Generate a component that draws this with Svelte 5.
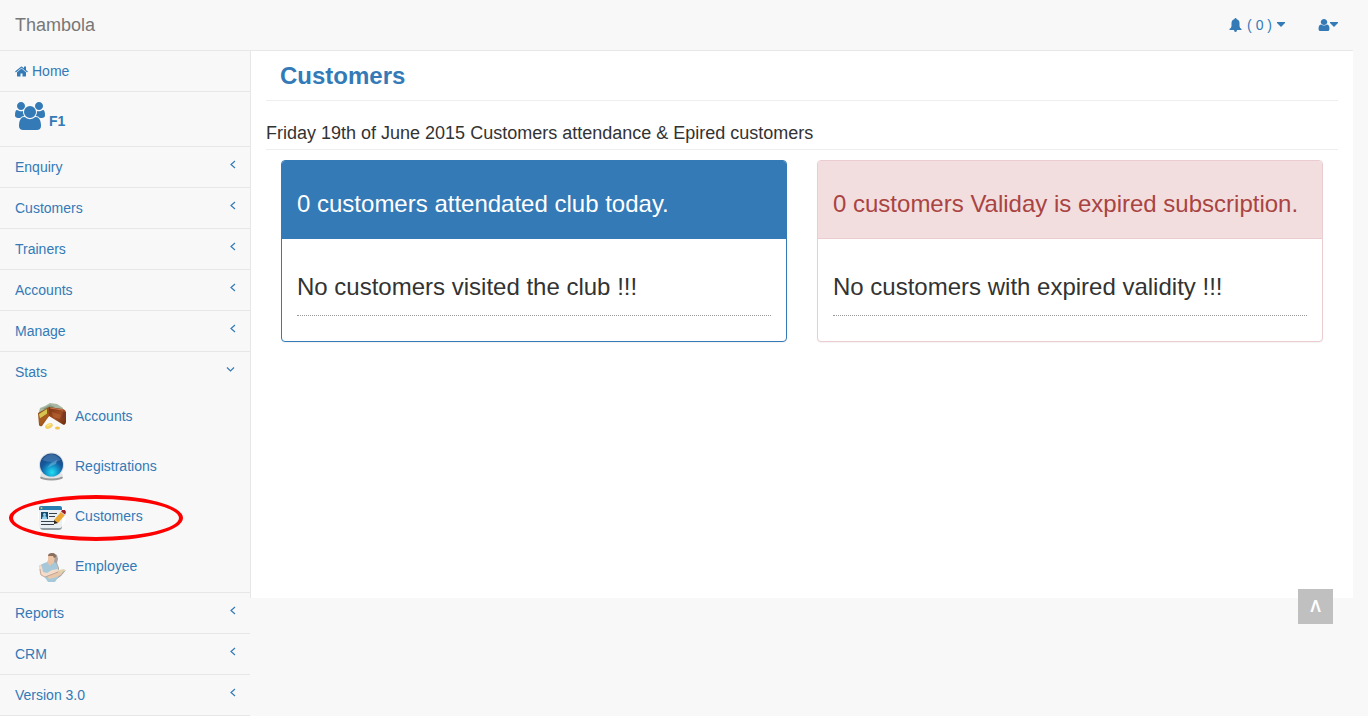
<script>
  const before = ['Enquiry', 'Customers', 'Trainers', 'Accounts', 'Manage'];
  const after = ['Reports', 'CRM', 'Version 3.0'];
  const stats = [
    { label: 'Accounts', icon: 'wallet' },
    { label: 'Registrations', icon: 'globe' },
    { label: 'Customers', icon: 'card', marked: true },
    { label: 'Employee', icon: 'person' }
  ];
  const panels = [
    { kind: 'primary', title: '0 customers attendated club today.', body: 'No customers visited the club !!!' },
    { kind: 'danger', title: '0 customers Validay is expired subscription.', body: 'No customers with expired validity !!!' }
  ];
</script>

{#snippet caret()}
  <svg class="caret" viewBox="0 0 8 5" aria-hidden="true"><path d="M0 0h8v1L4 5 0 1z" /></svg>
{/snippet}

{#snippet section(label)}
  <li>
    <a class="row" href="#top">
      <span>{label}</span>
      <svg class="arrow" viewBox="0 0 10 10" aria-hidden="true"><path d="M7 1 3 4.500 7 8" /></svg>
    </a>
  </li>
{/snippet}

{#snippet picture(name)}
  <svg class="picture" viewBox="0 0 30 30" aria-hidden="true">
    {#if name === 'wallet'}
      <path d="M2 10 3 6l5-2 5-3 7 1 6 4v3l-9-3-5 1-10 5z" fill="#a9b8a3" />
      <path d="m5 7 8-4 5 2-7 2z" fill="#849c82" />
      <path d="m12 5 14 2q3 1 3 4v9q0 2-2 3l-2-1-13-8z" fill="url(#leather)" />
      <path d="m13 6 13 2" stroke="#c77b50" fill="none" />
      <path d="m15 10 9 3-1 4-7-2z" fill="#c4713b" opacity=".45" />
      <path d="M1 11 12 5v9L5 24q-2 1-3-1z" fill="#96511c" />
      <path d="m2 12 8-5v5l-7 5z" fill="#d5c54f" />
      <path d="m2 17 9-6 1 3-8 9q-2 0-2-6z" fill="#a85a1f" />
      <path d="M26 10h3v6h-4z" fill="#7a3a22" />
      <ellipse cx="12" cy="24" rx="4" ry="2.500" fill="#f5cf62" transform="rotate(-25 12 24)" />
      <ellipse cx="20.500" cy="26" rx="2.500" ry="1.600" fill="#f3c14c" />
      <path d="m10 24 4-2" stroke="#fff0a0" fill="none" />
    {:else if name === 'globe'}
      <ellipse cx="14.500" cy="25.500" rx="11.500" ry="3" fill="#999" />
      <ellipse cx="14.500" cy="23" rx="11.500" ry="3.500" fill="#e4e4e4" />
      <circle cx="14.500" cy="13" r="12.500" fill="#d5dbe1" />
      <circle cx="14.500" cy="13" r="11.500" fill="url(#ball)" />
      <path d="M5 8q9-12 19 0-9 4-19 0z" fill="#6a9ccb" opacity=".4" />
      <path d="m10 16 4-5 6-3-1 4-5 2z" fill="#74bbe0" opacity=".55" />
    {:else if name === 'card'}
      <circle cx="15" cy="14" r="14" fill="#fff" />
      <path d="M3 24v2q1 2 3 2h16q2 0 3-2V8z" fill="#929ca3" />
      <rect x="2" y="4" width="23" height="22" rx="2" fill="#e9eff3" />
      <path d="M2 8V6q0-2 2-2h19q2 0 2 2v2z" fill="#2a7fb0" />
      <circle cx="4.500" cy="6" r="1" fill="#f8bd37" />
      <path d="M4 10h7v7H4z" fill="#174b70" />
      <circle cx="7.500" cy="12.500" r="1.500" fill="#8fd0ef" />
      <path d="M5 17q0-3 2.500-3t2.500 3z" fill="#8fd0ef" />
      <path d="M12 11.500h8M12 14.500h6M4 19.500h13M4 22.500h13" stroke="#34424d" />
      <path d="m17 18 7-8 4 3-7 8z" fill="#eda62f" />
      <path d="m17 18 4 3-4 1z" fill="#30251b" />
      <path d="m24 10 1-2h3l1 2-1 3z" fill="#9c1d28" />
      <path d="m24 10 4 3" stroke="#ddd" />
    {:else}
      <path d="m16 1 4 2 1 4-1 4 2 5v5l7-3-5 6-7 5-2-6z" fill="#6f6b67" opacity=".6" />
      <path d="m10 10-5 2-3 2 2 7 5 6 2 3h7l4-6-1-9-2-4-4-2z" fill="#a7c8d8" />
      <path d="m11 4 4-2 3 3-1 5-2 2-4-2z" fill="#ecc4a6" />
      <path d="M11 4q0-3 4-3 4 0 4 4l-2 1-1-2z" fill="#8b6d5b" />
      <path d="m10 10 1-2 4 3-2 3z" fill="#eac3a6" />
      <path d="m3 12-1 4 1 6q2 3 5 3l9-3 5-3-1-2-6 1-5 3-4-1-1-5z" fill="#f4dccb" />
      <path d="m10 24 8-3 3-2 5-1-2 5-7 3-5 1z" fill="#e8c7ac" />
      <path d="m22 18 5-1 1 1-4 4z" fill="#e2d3ab" />
      <path d="m3 17 1 6 4 2 8-3 5-2" stroke="#a88977" stroke-width=".6" fill="none" />
    {/if}
  </svg>
{/snippet}

<svg class="defs" width="0" height="0" aria-hidden="true">
  <defs>
    <linearGradient id="leather" x1="0" y1="0" x2="1" y2="1">
      <stop offset="0" stop-color="#7e3414" /><stop offset=".5" stop-color="#a04d22" /><stop offset="1" stop-color="#6b2b10" />
    </linearGradient>
    <radialGradient id="ball" cx=".52" cy=".82" r=".8">
      <stop offset="0" stop-color="#22e0f2" /><stop offset=".3" stop-color="#159ed0" /><stop offset=".6" stop-color="#155a9c" /><stop offset="1" stop-color="#1c4680" />
    </radialGradient>
  </defs>
</svg>

<div class="page" id="top">
  <header>
    <a class="brand" href="#top">Thambola</a>
    <nav class="tools" aria-label="Account">
      <a href="#top" aria-label="Notifications (0)">
        <svg class="bell" viewBox="0 0 12 14" aria-hidden="true"><path d="M6 0q1 0 1 1 3 1 3 4v3q0 2 2 3v1H7.500Q7.500 14 6 14t-1.500-2H0v-1q2-1 2-3V5q0-3 3-4 0-1 1-1z" /></svg>
        <span>( 0 )</span>
        {@render caret()}
      </a>
      <a class="user" href="#top" aria-label="User menu">
        <svg class="glyph" viewBox="192 128 1408 1536" preserveAspectRatio="none" aria-hidden="true"><path d="M1536 1399q0 109-62.500 187t-150.500 78h-854q-88 0-150.500-78t-62.500-187q0-85 8.500-160.500t31.500-152 58.500-131 94-89 134.500-34.500q131 128 313 128t313-128q76 0 134.500 34.500t94 89 58.500 131 31.500 152 8.500 160.500zm-256-887q0 159-112.500 271.500t-271.500 112.500-271.500-112.500-112.500-271.500 112.500-271.500 271.500-112.500 271.500 112.500 112.500 271.500z" /></svg>
        {@render caret()}
      </a>
    </nav>
  </header>

  <div class="columns">
    <nav class="side" aria-label="Main">
      <ul>
        <li>
          <a class="row home" href="#top">
            <svg class="house" viewBox="64 192 1664 1408" aria-hidden="true"><path d="M1472 992v480q0 26-19 45t-45 19h-384v-384h-256v384h-384q-26 0-45-19t-19-45v-480q0-1 .5-3t.5-3l575-474 575 474q1 2 1 6zm223-69l-62 74q-8 9-21 11h-3q-13 0-21-7l-692-577-692 577q-12 8-24 7-13-2-21-11l-62-74q-8-10-7-23.500t11-21.500l719-599q32-26 76-26t76 26l244 204v-195q0-14 9-23t23-9h192q14 0 23 9t9 23v408l219 182q10 8 11 21.500t-7 23.500z" /></svg>
            <span>Home</span>
          </a>
        </li>
        <li>
          <a class="row club" href="#top">
            <svg class="group" viewBox="-64 0 1920 1792" aria-hidden="true"><path d="M529 896q-162 5-265 128h-134q-82 0-138-40.500t-56-118.500q0-353 124-353 6 0 43.500 21t97.500 42.500 119 21.500q67 0 133-23-5 37-5 66 0 139 81 256zm1071 637q0 120-73 189.500t-194 69.500h-874q-121 0-194-69.500t-73-189.500q0-53 3.500-103.500t14-109 26.500-108.500 43-97.500 62-81 85.500-53.500 111.500-20q10 0 43 21.500t73 48 107 48 135 21.500 135-21.500 107-48 73-48 43-21.500q61 0 111.500 20t85.500 53.500 62 81 43 97.500 26.500 108.500 14 109 3.500 103.500zm-1024-1277q0 106-75 181t-181 75-181-75-75-181 75-181 181-75 181 75 75 181zm704 384q0 159-112.500 271.500t-271.500 112.500-271.500-112.500-112.500-271.500 112.500-271.500 271.500-112.500 271.500 112.500 112.500 271.500zm576 225q0 78-56 118.500t-138 40.500h-134q-103-123-265-128 81-117 81-256 0-29-5-66 66 23 133 23 59 0 119-21.500t97.500-42.500 43.500-21q124 0 124 353zm-128-609q0 106-75 181t-181 75-181-75-75-181 75-181 181-75 181 75 75 181z" /></svg>
            <strong>F1</strong>
          </a>
        </li>
        {#each before as label}{@render section(label)}{/each}
        <li>
          <a class="row" href="#top">
            <span>Stats</span>
            <svg class="arrow open" viewBox="0 0 10 10" aria-hidden="true"><path d="M2 2.500 5.500 6 9 2.500" /></svg>
          </a>
          <ul>
            {#each stats as item}
              <li class="sub">
                <a href="#top">{@render picture(item.icon)}<span>{item.label}</span></a>
                {#if item.marked}<i class="ring"></i>{/if}
              </li>
            {/each}
          </ul>
        </li>
        {#each after as label}{@render section(label)}{/each}
      </ul>
    </nav>

    <main>
      <h1>Customers</h1>
      <h2>Friday 19th of June 2015 Customers attendance &amp; Epired customers</h2>
      <div class="panels">
        {#each panels as panel}
          <section class={panel.kind}>
            <h3>{panel.title}</h3>
            <div class="body"><p>{panel.body}</p></div>
          </section>
        {/each}
      </div>
    </main>
  </div>

  <button class="to-top" type="button" aria-label="Back to top">Λ</button>
</div>

<style>
  :global(body) {
    background: #f8f8f8;
  }
  * {
    box-sizing: border-box;
  }
  .defs {
    position: absolute;
  }
  .page {
    position: relative;
    padding-right: 15px;
    font: 14px/20px "Liberation Sans", Arial, sans-serif;
    color: #333;
  }
  a {
    color: #337ab7;
    text-decoration: none;
  }
  svg {
    fill: #337ab7;
    flex: none;
  }
  ul {
    list-style: none;
    margin: 0;
    padding: 0;
  }
  header {
    display: flex;
    justify-content: space-between;
    align-items: center;
    height: 51px;
    padding: 0 15px;
    border-bottom: 1px solid #e7e7e7;
  }
  .brand {
    font-size: 18px;
    color: #777;
  }
  .tools {
    display: flex;
    gap: 33px;
  }
  .tools a {
    display: flex;
    align-items: center;
    gap: 5px;
  }
  .tools .user {
    gap: 0;
  }
  .bell {
    width: 13px;
    height: 14px;
  }
  .glyph {
    width: 12px;
    height: 12px;
  }
  .caret {
    width: 8px;
    height: 5px;
    margin-bottom: 2px;
  }
  .columns {
    display: flex;
    align-items: flex-start;
  }
  .side {
    flex: none;
    width: 250px;
  }
  .side > ul > li {
    border-bottom: 1px solid #e7e7e7;
  }
  .row {
    display: flex;
    justify-content: space-between;
    padding: 10px 15px;
  }
  .home,
  .club {
    justify-content: flex-start;
    gap: 4px;
  }
  .house {
    width: 13px;
    height: 11px;
    margin-top: 5px;
  }
  .group {
    width: 30px;
    height: 28px;
  }
  .club {
    height: 54px;
  }
  .club strong {
    margin-top: 9px;
  }
  .arrow {
    width: 10px;
    height: 10px;
    margin-top: 3px;
    margin-right: -3px;
  }
  .arrow.open {
    margin-right: 0;
  }
  .arrow path {
    fill: none;
    stroke: #337ab7;
    stroke-width: 1.2;
  }
  .sub {
    position: relative;
  }
  .sub a {
    display: flex;
    gap: 8px;
    height: 50px;
    padding: 10px 15px 10px 37px;
    line-height: 28px;
  }
  .picture {
    width: 30px;
    height: 30px;
  }
  .ring {
    position: absolute;
    top: 3px;
    left: 9px;
    width: 174px;
    height: 46px;
    border: 4px solid #f00;
    border-radius: 50%;
    pointer-events: none;
  }
  main {
    flex: 1;
    min-width: 0;
    min-height: 547px;
    padding: 0 15px;
    background: #fff;
    border-left: 1px solid #e7e7e7;
  }
  h1,
  h2,
  h3,
  p {
    margin: 0;
  }
  h1 {
    padding: 10px 14px;
    border-bottom: 1px solid #eee;
    font-size: 24px;
    line-height: 29px;
    color: #337ab7;
  }
  h2 {
    padding: 22px 0 6px;
    border-bottom: 1px solid #eee;
    font-size: 18px;
    font-weight: 500;
    line-height: 20px;
  }
  .panels {
    display: grid;
    grid-template-columns: 1fr 1fr;
    gap: 30px;
    padding: 10px 15px;
  }
  section {
    border: 1px solid #337ab7;
    border-radius: 4px;
    background: #fff;
    box-shadow: 0 1px 1px rgba(0, 0, 0, 0.05);
  }
  h3,
  p {
    font-size: 24px;
    font-weight: 400;
    line-height: 26px;
  }
  h3 {
    padding: 30px 15px 21px;
    border-bottom: 1px solid #337ab7;
    border-radius: 3px 3px 0 0;
    background: #337ab7;
    color: #fff;
  }
  .danger {
    border-color: #ebccd1;
  }
  .danger h3 {
    border-color: #ebccd1;
    background: #f2dede;
    color: #a94442;
  }
  .body {
    padding: 35px 15px 25px;
  }
  p {
    padding-bottom: 15px;
    border-bottom: 1px dotted #999;
  }
  .to-top {
    position: fixed;
    right: 35px;
    bottom: 92px;
    width: 35px;
    height: 35px;
    padding: 0;
    border: 0;
    background: #c0c0c0;
    color: #fff;
    font: bold 16px/34px "Liberation Sans", Arial, sans-serif;
  }
</style>
